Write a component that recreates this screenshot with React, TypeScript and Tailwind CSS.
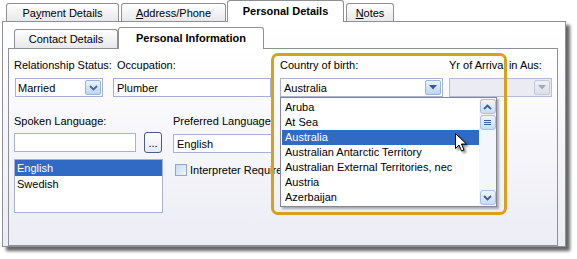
import type { ReactNode } from 'react'

const countries = [
    'Aruba',
    'At Sea',
    'Australia',
    'Australian Antarctic Territory',
    'Australian External Territories, nec',
    'Austria',
    'Azerbaijan',
]

function OuterTab({ w, active, ml, children }: { w: string; active?: boolean; ml?: string; children: ReactNode }) {
    if (active) {
        return (
            <div className={`${w} ${ml ?? ''} h-[22px] bg-white border border-b-0 border-[#8d9096] rounded-t-[3px] flex items-center justify-center font-bold pb-[2px]`}>
                {children}
            </div>
        )
    }
    return (
        <div className={`${w} ${ml ?? ''} h-[18px] mb-px bg-gradient-to-b from-white to-[#e8e8ea] border border-b-0 border-[#8d9096] rounded-t-[3px] flex items-center justify-center`}>
            {children}
        </div>
    )
}

function ComboButton({ kind }: { kind: 'chevron' | 'triangle' | 'disabled' }) {
    if (kind === 'disabled') {
        return (
            <div className="w-[16px] h-[15px] rounded-[2px] border border-[#c3c7d6] bg-gradient-to-b from-[#eef0f6] to-[#dcdfe9] flex items-center justify-center">
                <svg width="8" height="5" viewBox="0 0 8 5"><path d="M0 0 H8 L4 4.5 Z" fill="#a3a8b8" /></svg>
            </div>
        )
    }
    return (
        <div className="w-[16px] h-[15px] rounded-[2px] border border-[#98b4de] bg-gradient-to-b from-[#eaf3fe] to-[#bcd5f5] flex items-center justify-center">
            {kind === 'chevron' ? (
                <svg width="9" height="6" viewBox="0 0 9 6"><path d="M1 1 L4.5 4.5 L8 1" stroke="#4d6591" strokeWidth="1.8" fill="none" /></svg>
            ) : (
                <svg width="8" height="5" viewBox="0 0 8 5"><path d="M0 0 H8 L4 4.5 Z" fill="#3b5894" /></svg>
            )}
        </div>
    )
}

function ScrollButton({ up }: { up?: boolean }) {
    return (
        <div className="w-[16px] h-[15px] rounded-[3px] border border-[#a6bfe3] bg-gradient-to-b from-[#f0f6fe] to-[#c8dcf6] flex items-center justify-center">
            <svg width="9" height="6" viewBox="0 0 9 6">
                <path d={up ? 'M1 5 L4.5 1.5 L8 5' : 'M1 1 L4.5 4.5 L8 1'} stroke="#3d5d96" strokeWidth="1.8" fill="none" />
            </svg>
        </div>
    )
}

export default function App() {
    return (
        <div className="w-[577px] h-[259px] bg-white relative overflow-hidden font-['Liberation_Sans',Arial,sans-serif] text-[11px] text-black leading-[14px]">
            <div className="pl-[2px]">
                {/* top tabs */}
                <div className="flex items-end h-[22px] pl-[4px] relative z-10">
                    <OuterTab w="w-[113px]">Pa<span className="underline">y</span>ment Details</OuterTab>
                    <OuterTab w="w-[105px]" ml="ml-[2px]"><span className="underline">A</span>ddress/Phone</OuterTab>
                    <OuterTab w="w-[117px]" ml="ml-px" active>Personal Details</OuterTab>
                    <OuterTab w="w-[48px]" ml="ml-[2px]"><span className="underline">N</span>otes</OuterTab>
                </div>

                <div className="w-[564px] h-[226px] -mt-px border border-[#8d9096] bg-gradient-to-b from-white to-[#ecedf4] shadow-[4px_4px_3px_rgba(0,0,0,0.6)] pl-[5px] flex flex-col">
                    {/* inner tabs */}
                    <div className="flex items-end h-[27px] pl-[6px] relative z-10">
                        <div className="w-[104px] h-[19px] mb-px bg-gradient-to-b from-white to-[#e8e8ea] border border-b-0 border-[#8d9096] rounded-t-[3px] flex items-center justify-center">
                            Contact Details
                        </div>
                        <div className="w-[146px] h-[22px] bg-white border border-b-0 border-[#8d9096] rounded-t-[3px] flex items-center justify-center font-bold pb-[2px]">
                            Personal Information
                        </div>
                    </div>

                    <div className="w-[550px] h-[198px] -mt-px border border-[#8d9096] bg-gradient-to-b from-white to-[#ecedf5] pl-[5px] pt-[9px]">
                        {/* first row */}
                        <div className="flex">
                            <div className="w-[90px] flex flex-col">
                                <span className="whitespace-nowrap">Relationship Status:</span>
                                <div className="mt-[6px] ml-px w-[88px] h-[19px] bg-white border border-[#a9b1d3] flex items-center justify-between pl-[2px] pr-px">
                                    <span>Married</span>
                                    <ComboButton kind="chevron" />
                                </div>
                            </div>
                            <div className="ml-[9px] w-[158px] flex flex-col">
                                <span className="pl-[4px]">Occupation:</span>
                                <div className="mt-[6px] h-[19px] bg-white border border-[#a9b1d3] flex items-center pl-[3px]">Plumber</div>
                            </div>
                            <div className="ml-[9px] w-[163px] flex flex-col">
                                <span>Country of birth:</span>
                                <div className="mt-[6px] h-[19px] bg-white border border-[#a9b1d3] flex items-center justify-between pl-[3px] pr-px">
                                    <span>Australia</span>
                                    <ComboButton kind="triangle" />
                                </div>
                            </div>
                            <div className="ml-[6px] w-[103px] flex flex-col">
                                <span className="whitespace-nowrap">Yr of Arrival in Aus:</span>
                                <div className="mt-[6px] h-[19px] bg-[#ebecf3] border border-[#b5bbd6] flex items-center justify-end pr-px">
                                    <ComboButton kind="disabled" />
                                </div>
                            </div>
                        </div>

                        {/* second row */}
                        <div className="flex mt-[17px]">
                            <div className="w-[149px] flex flex-col">
                                <span>Spoken Language:</span>
                                <div className="flex items-start mt-[5px]">
                                    <div className="w-[122px] h-[19px] bg-white border border-[#a9b1d3]" />
                                    <div className="ml-[8px] -mt-px w-[18px] h-[21px] rounded-[3px] border border-[#4b5d82] bg-gradient-to-b from-white to-[#e6e9f0] flex items-end justify-center pb-[3px] leading-none">
                                        ...
                                    </div>
                                </div>
                                <div className="mt-[6px] h-[54px] bg-white border border-[#a9b1d3] flex flex-col">
                                    <div className="h-[16px] bg-[#316ac5] text-white pl-[2px] leading-[16px]">English</div>
                                    <div className="h-[16px] pl-[2px] leading-[16px]">Swedish</div>
                                </div>
                            </div>
                            <div className="ml-[10px] flex flex-col">
                                <span className="whitespace-nowrap">Preferred Language:</span>
                                <div className="mt-[6px] w-[100px] h-[19px] bg-white border border-[#a9b1d3] flex items-center pl-[3px]">English</div>
                                <div className="mt-[10px] ml-[2px] flex items-center gap-[3px] whitespace-nowrap">
                                    <div className="w-[12px] h-[12px] border border-[#8fa7d0] bg-gradient-to-br from-[#c9dbf3] to-[#eef4fc]" />
                                    <span>Interpreter Required</span>
                                </div>
                            </div>
                        </div>
                    </div>
                </div>
            </div>

            {/* highlight around the country field */}
            <div className="absolute left-[271px] top-[53px] w-[236px] h-[162px] border-[3px] border-[#d6a21c] rounded-[7px] z-20" />

            {/* open country list */}
            <div className="absolute left-[280px] top-[97px] w-[217px] h-[110px] bg-white border border-[#828790] shadow-[2px_2px_2px_rgba(0,0,0,0.3)] flex z-30 pt-[2px] pl-px">
                <div className="w-[197px] flex flex-col">
                    {countries.map((c) => (
                        <div
                            key={c}
                            className={`h-[15px] leading-[15px] pl-[3px] whitespace-nowrap ${c === 'Australia' ? 'bg-[#316ac5] text-white' : ''}`}
                        >
                            {c}
                        </div>
                    ))}
                </div>
                <div className="w-[17px] h-[106px] bg-[#f3f6fc] flex flex-col items-center justify-between -mt-px">
                    <div className="flex flex-col items-center">
                        <ScrollButton up />
                        <div className="mt-px w-[16px] h-[15px] rounded-[3px] border border-[#a6bfe3] bg-gradient-to-b from-[#f0f6fe] to-[#c8dcf6] flex flex-col items-center justify-center gap-px">
                            <div className="w-[7px] h-px bg-[#3d5d96]" />
                            <div className="w-[7px] h-px bg-[#3d5d96]" />
                            <div className="w-[7px] h-px bg-[#3d5d96]" />
                        </div>
                    </div>
                    <ScrollButton />
                </div>
            </div>

            {/* mouse pointer */}
            <svg className="absolute left-[455px] top-[133px] z-40 drop-shadow-[2px_2px_1px_rgba(0,0,0,0.45)]" width="13" height="20" viewBox="0 0 13 20">
                <path d="M0.5 0.5 L0.5 15.5 L4 12 L6.5 18 L9 17 L6.5 11 L11.5 11 Z" fill="white" stroke="black" strokeWidth="1" strokeLinejoin="round" />
            </svg>
        </div>
    )
}
